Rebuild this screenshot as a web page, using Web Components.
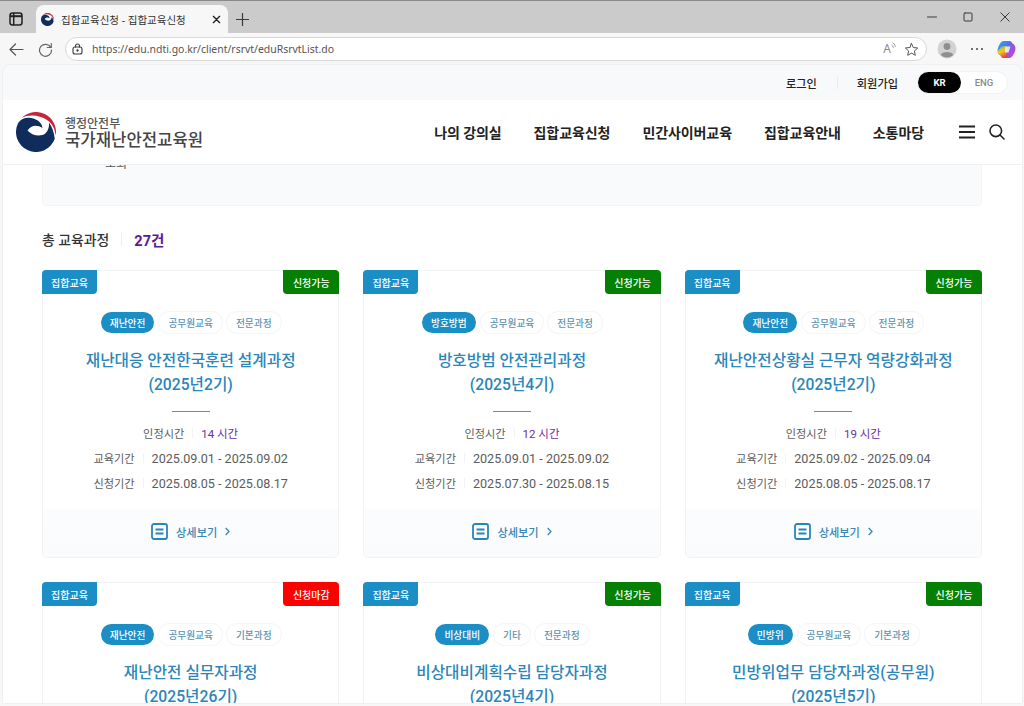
<!DOCTYPE html>
<html lang="ko"><head><meta charset="utf-8"><title>집합교육신청</title>
<style>
html,body{margin:0;height:706px;overflow:hidden;background:#f7f7f7}
body{font-family:Roboto,"Noto Sans CJK KR",sans-serif;display:flex;flex-direction:column}
</style></head><body>
<tab-strip></tab-strip>
<addr-bar></addr-bar>
<page-frame>
  <util-bar></util-bar>
  <site-header></site-header>
  <page-content>
    <search-panel></search-panel>
    <total-bar count="27건"></total-bar>
    <course-grid>
      <course-card status="신청가능" t1="재난안전" t2="공무원교육" t3="전문과정" hours="14 시간" edu="2025.09.01 - 2025.09.02" app="2025.08.05 - 2025.08.17">재난대응 안전한국훈련 설계과정<br>(2025년2기)</course-card>
      <course-card status="신청가능" t1="방호방범" t2="공무원교육" t3="전문과정" hours="12 시간" edu="2025.09.01 - 2025.09.02" app="2025.07.30 - 2025.08.15">방호방범 안전관리과정<br>(2025년4기)</course-card>
      <course-card status="신청가능" t1="재난안전" t2="공무원교육" t3="전문과정" hours="19 시간" edu="2025.09.02 - 2025.09.04" app="2025.08.05 - 2025.08.17">재난안전상황실 근무자 역량강화과정<br>(2025년2기)</course-card>
      <course-card closed status="신청마감" t1="재난안전" t2="공무원교육" t3="기본과정" hours="16 시간" edu="2025.09.01 - 2025.09.02" app="2025.08.05 - 2025.08.17">재난안전 실무자과정<br>(2025년26기)</course-card>
      <course-card status="신청가능" t1="비상대비" t2="기타" t3="전문과정" hours="16 시간" edu="2025.09.01 - 2025.09.02" app="2025.08.05 - 2025.08.17">비상대비계획수립 담당자과정<br>(2025년4기)</course-card>
      <course-card status="신청가능" t1="민방위" t2="공무원교육" t3="기본과정" hours="16 시간" edu="2025.09.01 - 2025.09.02" app="2025.08.05 - 2025.08.17">민방위업무 담당자과정(공무원)<br>(2025년5기)</course-card>
    </course-grid>
  </page-content>
</page-frame>
<script>
const TAEGEUK=(s)=>`<svg width="${s}" height="${s}" viewBox="0 0 40 40" aria-hidden="true"><path d="M5.860 5.860A20 20 0 0 1 39.700 23.500C39 17 36 11 31 8 24 3 13 2 5.860 5.860Z" fill="#c6243a"/><path d="M33 10.500C36.500 15 38 21 38.790 26.840A20 20 0 1 1 2.180 10.920C5 6 12 4.500 17.500 6.500 22 8 26 11 26.500 16 21 12.500 15 13 11.500 18.500 15 22.500 21 24.500 26.500 23 31 21.500 33.500 16 33 10.500Z" fill="#0f2c5c"/></svg>`;
function def(name,css,html){customElements.define(name,class extends HTMLElement{connectedCallback(){if(this.shadowRoot)return;const r=this.attachShadow({mode:'open'});r.innerHTML=`<style>${css}</style>`+(typeof html==='function'?html(this):html);}})}
const IC='fill="none" stroke="#3a3a3a" stroke-linecap="round" stroke-linejoin="round"';

def('tab-strip',`
:host{display:flex;height:33px;flex:none;background:#cbcbcb;border-top:1px solid #8a8a8a;box-sizing:border-box;align-items:flex-end;font-family:"Noto Sans","Noto Sans CJK KR",sans-serif}
.side{width:36px;height:28px;display:flex;align-items:center;justify-content:center;box-sizing:border-box;padding-right:4px}
.tab{width:192px;height:28px;background:#f7f7f7;border-radius:8px 8px 0 0;display:flex;align-items:center;padding:0 7px 0 5px;box-sizing:border-box;gap:7px}
.t{flex:1;font-size:10.500px;color:#333;white-space:nowrap}
.plus{width:28px;height:28px;display:flex;align-items:center;justify-content:center}
.win{margin-left:auto;display:flex;height:32px;align-items:center}
.win span{width:36.500px;display:flex;justify-content:center}
`,`<div class="side"><svg width="14" height="14" viewBox="0 0 14 14" fill="none" stroke="#222" stroke-width="1.500" stroke-linejoin="round"><rect x="1" y="1" width="12" height="12" rx="2.500"/><path d="M1 4.200H13" stroke-width="2"/><path d="M4.700 1V13"/></svg></div>
<div class="tab">${TAEGEUK(13)}<span class="t">집합교육신청 - 집합교육신청</span><svg width="9" height="9" viewBox="0 0 10 10" ${IC} stroke-width="1.500" style="stroke:#222"><path d="M1.500 1.500 8.500 8.500M8.500 1.500 1.500 8.500"/></svg></div>
<div class="plus"><svg width="13" height="13" viewBox="0 0 13 13" ${IC} stroke-width="1.200"><path d="M6.500 .5V12.500M.5 6.500H12.500"/></svg></div>
<div class="win"><span><svg width="10" height="10" viewBox="0 0 10 10" ${IC} stroke-width="1"><path d="M.5 5H9.500"/></svg></span><span><svg width="10" height="10" viewBox="0 0 10 10" ${IC} stroke-width="1"><rect x="1" y="1" width="8" height="8" rx="1"/></svg></span><span style="margin-right:1px"><svg width="10" height="10" viewBox="0 0 10 10" ${IC} stroke-width="1"><path d="M.8 .8 9.200 9.200M9.200 .8 .8 9.200"/></svg></span></div>`);

def('addr-bar',`
:host{display:flex;flex:none;height:32px;background:#f7f7f7;align-items:center;box-sizing:border-box;padding:0 8px 0 8px;font-family:"Noto Sans",sans-serif}
.b{width:16px;display:flex;justify-content:center}
.url{width:862px;height:24px;box-sizing:border-box;margin-left:12px;background:#fff;border:1px solid #d8d8d8;border-radius:12px;display:flex;align-items:center;padding:0 7px 0 6px}
.u{font-size:10.450px;color:#555;margin-left:9px;flex:1;white-space:nowrap}
.r{display:flex;align-items:center;gap:8px}
.A{display:flex;align-items:flex-start;font:12px "Noto Sans",sans-serif;color:#8a8a8a;line-height:14px}
.right{display:flex;align-items:center;margin-left:10px;flex:1;justify-content:space-between}
`,`<span class="b"><svg width="15" height="13" viewBox="0 0 15 13" fill="none" stroke="#555" stroke-width="1.200" stroke-linecap="round" stroke-linejoin="round"><path d="M14 6.500H1M6.500 1 1 6.500 6.500 12"/></svg></span>
<span class="b" style="margin-left:13px"><svg width="15" height="15" viewBox="0 0 15 15" ${IC} stroke-width="1.200" style="stroke:#666"><path d="M12.800 5.500A6 6 0 1 0 13.500 8M13.300 1.500V5.500H9.300"/></svg></span>
<div class="url"><svg width="11" height="12" viewBox="0 0 11 12" ${IC} stroke-width="1.100"><rect x="1" y="4" width="9" height="7" rx="2"/><path d="M3.500 4V3A2 2 0 0 1 7.500 3V4"/><circle cx="5.500" cy="7.500" r=".6" fill="#3a3a3a"/></svg><span class="u">https://edu.ndti.go.kr/client/rsrvt/eduRsrvtList.do</span><span class="r"><span class="A">A<svg width="5" height="7" viewBox="0 0 5 7" fill="none" stroke="#8a8a8a" stroke-width=".8"><path d="M.6 3Q2 3.500 2.500 6M1.500 .8Q4 1.500 4.400 5"/></svg></span><svg width="15" height="15" viewBox="0 0 15 15" ${IC} stroke-width="1" style="stroke:#555"><path d="M7.500 1.500 9.300 5.500 13.700 6 10.400 9 11.300 13.300 7.500 11.100 3.700 13.300 4.600 9 1.300 6 5.700 5.500Z"/></svg></span></div>
<div class="right"><svg width="20" height="20" viewBox="0 0 20 20"><circle cx="10" cy="10" r="9.500" fill="#d2d2d2"/><circle cx="10" cy="7.500" r="3.400" fill="#8f8f8f"/><path d="M3.800 15.800C5 12 15 12 16.200 15.800 13 19.500 7 19.500 3.800 15.800Z" fill="#8f8f8f"/></svg>
<svg width="14" height="4" viewBox="0 0 14 4"><g fill="#444"><circle cx="2" cy="2" r="1"/><circle cx="7" cy="2" r="1"/><circle cx="12" cy="2" r="1"/></g></svg>
<svg width="19" height="19" viewBox="0 0 19 19"><defs><linearGradient id="c1" x1="0" y1="0" x2="1" y2=".7"><stop offset="0" stop-color="#22b0e8"/><stop offset=".5" stop-color="#5a6cf0"/><stop offset="1" stop-color="#d040c0"/></linearGradient><linearGradient id="c3" x1="0" y1="0" x2=".5" y2="1"><stop offset="0" stop-color="#44c47a"/><stop offset=".5" stop-color="#f5c62a"/><stop offset="1" stop-color="#ef3f3a"/></linearGradient></defs><path d="M6.500 1H12.500C14 1 15 2 15.300 3.300 17 4 18.500 6 18.500 8.500 18.500 11 17 14 15.500 16 14.500 17.500 13 18 11.500 18H7C5 18 4 17 3.800 15.500 2 15 .5 13 .6 10.500 .7 8 2 5 3.500 3 4.300 1.800 5.300 1 6.500 1Z" fill="url(#c1)"/><path d="M3.500 7.500C5 6 7 6 9 6 10 7 10 8.500 9.500 10L9.500 13C9 15 10 17 12 18H7C5 18 4 17 3.800 15.500 2 15 .5 13 .6 10.500 1.500 10 2.500 9 3.500 7.500Z" fill="url(#c3)"/><path d="M8.500 6.500H13.500L11.500 12.500H8Z" fill="#fff" opacity=".8"/></svg></div>`);

def('page-frame',`:host{display:flex;flex-direction:column;flex:1;min-height:0;margin:0 2px 3px 3px;background:#fff;border-radius:8px 8px 0 0;overflow:hidden;box-shadow:0 0 1px #bbb}`,`<slot></slot>`);

def('util-bar',`
:host{display:flex;flex:none;height:35px;background:#f7f9fb;align-items:center;justify-content:flex-end;padding-right:15px;box-sizing:border-box;font-size:11.200px;font-weight:500;color:#222}
.d{width:1px;height:12px;background:#e8eaec;margin:0 19px 0 20px}
.tg{display:flex;width:89px;height:21px;margin-left:20px;background:#fff;border-radius:11px;font-size:9.500px;box-shadow:0 0 0 1px #f0f2f4}
.tg span{display:flex;align-items:center;justify-content:center}
.k{width:43px;background:#000;color:#fff;border-radius:11px;font-weight:700}
.e{flex:1;color:#8a8a8a;font-weight:500}
`,`<span>로그인</span><span class="d"></span><span>회원가입</span><div class="tg"><span class="k">KR</span><span class="e">ENG</span></div>`);

def('site-header',`
:host{display:flex;flex:none;height:65px;background:#fff;border-bottom:1px solid #eef0f2;box-sizing:border-box;align-items:center;padding:0 17px 0 13px;z-index:2;position:relative}
.lg{display:flex;align-items:center;gap:9px;margin-top:-1px}
.tx{padding-top:4px}
.n1{font-size:12px;color:#555;line-height:14px;font-weight:500}
.n2{font-size:16.700px;color:#444;line-height:20px;font-weight:500;white-space:nowrap}
nav{margin-left:auto;display:flex;gap:32px;font-size:14px;font-weight:700;color:#222;white-space:nowrap;letter-spacing:-.08px;margin-top:-1px}
.ic{display:flex;align-items:center;gap:14px;margin-left:35px}
`,`<div class="lg">${TAEGEUK(40)}<div class="tx"><div class="n1">행정안전부</div><div class="n2">국가재난안전교육원</div></div></div>
<nav><span>나의 강의실</span><span>집합교육신청</span><span>민간사이버교육</span><span>집합교육안내</span><span>소통마당</span></nav>
<div class="ic"><svg width="16" height="14" viewBox="0 0 16 14" fill="none" stroke="#222" stroke-width="2.200"><path d="M0 1.500H16M0 7H16M0 12.500H16"/></svg><svg width="16" height="16" viewBox="0 0 16 16" fill="none" stroke="#222" stroke-width="1.600" stroke-linecap="round"><circle cx="6.800" cy="6.800" r="5.800"/><path d="M11 11 15 15"/></svg></div>`);

def('page-content',`:host{display:block;flex:1;min-height:0;overflow:hidden;padding:0 40px 0 39px;background:#fff}`,`<slot></slot>`);

def('search-panel',`
:host{display:block;height:41px;background:#f9fafb;border:1px solid #f1f3f5;border-top:0;border-radius:0 0 5px 5px;box-sizing:border-box;overflow:hidden;padding-left:62px;font-size:12px;color:#555}
div{margin-top:-8px;line-height:14px}
`,`<div>조회</div>`);

def('total-bar',`
:host{display:flex;align-items:center;height:20px;margin:23px 0 21px;font-size:13.900px;font-weight:500;color:#333;white-space:nowrap}
i{width:1px;height:14px;background:#eceef0;margin:0 12px}
b{font-size:14.500px;font-weight:700;color:#5a189a}
`,h=>`<span>총 교육과정</span><i></i><b>${h.getAttribute('count')}</b>`);

def('course-grid',`:host{display:grid;grid-template-columns:repeat(3,1fr);column-gap:24px;row-gap:24px}`,`<slot></slot>`);

def('course-card',`
:host{display:flex;flex-direction:column;height:288px;box-sizing:border-box;border:1px solid #f0f2f4;border-radius:5px;background:#fff;position:relative;text-align:center}
.bd{position:absolute;top:-1px;height:24px;display:flex;align-items:center;justify-content:center;color:#fff;font-size:10px;font-weight:500}
.l{left:-1px;width:55px;background:#1b8ec6;border-radius:4px 0 4px 0}
.r{right:-1px;width:56px;background:#058005;border-radius:0 4px 0 4px}
:host([closed]) .r{background:#fe0000}
.tags{display:flex;justify-content:center;gap:5px;margin-top:41px;font-size:9.700px}
.tags span{height:21px;padding:0 9px;display:flex;align-items:center;border-radius:11px;color:#5a93b3;box-shadow:0 0 0 1px #f4f6f7;white-space:nowrap;font-weight:500}
.tags .on{background:#1b8ec6;color:#fff;box-shadow:none}
h3{margin:15.500px 0 0;font-size:15.700px;line-height:24.600px;font-weight:500;color:#2c86b8;white-space:nowrap}
.rule{width:38px;height:1px;background:#3f9bcb;margin:13px auto 0}
.inf{margin-top:9px;display:flex;flex-direction:column;align-items:center;color:#5c5c5c}
.row{height:25px;display:flex;align-items:center;font-size:12.600px;white-space:nowrap}
.row em{font-style:normal;font-size:11.200px}
.row i{width:1px;height:10px;background:#f0f2f4;margin:0 8px}
.row b{font-weight:400}
.row .p{color:#6a2fa5;font-size:11.500px}
.ft{margin-top:auto;height:48px;box-sizing:border-box;padding-bottom:3px;display:flex;align-items:center;justify-content:center;background:linear-gradient(#fafcfd,#f9fbfc);border-radius:0 0 5px 5px;color:#3b87b3;font-size:11.200px;font-weight:500;gap:8px}
`,h=>{const a=n=>h.getAttribute(n);return `<div class="bd l">집합교육</div><div class="bd r">${a('status')}</div>
<div class="tags"><span class="on">${a('t1')}</span><span>${a('t2')}</span><span>${a('t3')}</span></div>
<h3><slot></slot></h3><div class="rule"></div>
<div class="inf"><div class="row"><em>인정시간</em><i></i><b class="p">${a('hours')}</b></div><div class="row"><em>교육기간</em><i></i><b>${a('edu')}</b></div><div class="row"><em>신청기간</em><i></i><b>${a('app')}</b></div></div>
<div class="ft"><svg width="17" height="17" viewBox="0 0 17 17" fill="none" stroke="#2b86b5" stroke-width="1.800"><rect x="1" y="1" width="15" height="15" rx="2"/><path d="M4.500 6.500H12.500M4.500 10.500H12.500"/></svg><span>상세보기</span><svg width="5" height="9" viewBox="0 0 5 9" fill="none" stroke="#3b87b3" stroke-width="1.300"><path d="M.7 1 4 4.500 .7 8"/></svg></div>`});
</script>
</body></html>
